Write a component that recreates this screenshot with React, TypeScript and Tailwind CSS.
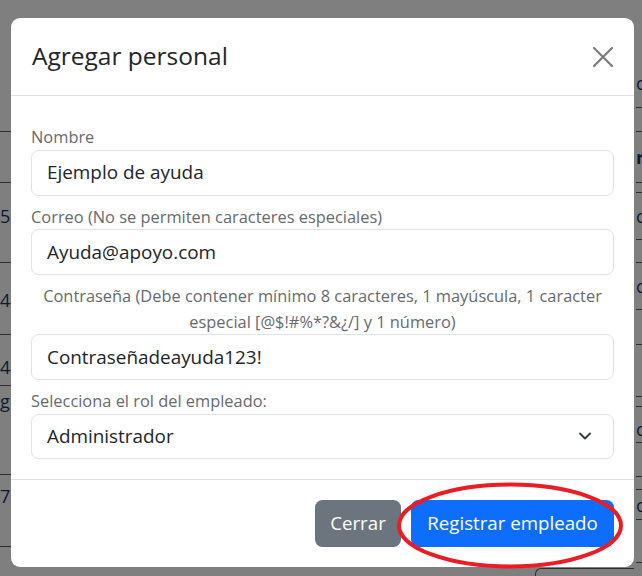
import { ChevronDown } from "lucide-react"

const font = { fontFamily: '"Open Sans", "Noto Sans", sans-serif' }

function Field({ label, value, center }: { label: string; value: string; center?: boolean }) {
  return (
    <div>
      <label
        className={`mt-2 block text-[16.4px] leading-[25.5px] text-[#666a6e] ${center ? "text-center px-1" : ""}`}
      >
        {label}
      </label>
      <div className="flex h-[46px] items-center rounded-[7.5px] border border-[#dee2e6] px-[15px] text-[18.9px] text-[#212529]">
        {value}
      </div>
    </div>
  )
}

export default function App() {
  return (
    <div className="relative h-[576px] w-full overflow-hidden bg-[#7f7f7f]" style={font}>
      {/* page behind the backdrop */}
      <div className="flex h-full text-[18px] text-[#0b1a33]">
        <div className="w-[11px] overflow-hidden whitespace-nowrap">
          <div className="h-[132px] border-b border-[#2e2e2e]"></div>
          <div className="h-[51px] border-b border-[#2e2e2e]"></div>
          <div className="flex h-[80px] items-center border-b border-[#2e2e2e] pb-[12px]">50</div>
          <div className="flex h-[72px] items-center border-b border-[#2e2e2e] pt-[4px]">44</div>
          <div className="flex h-[51px] items-end border-b border-[#2e2e2e] pb-[4px]">44</div>
          <div className="flex h-[89px] items-start border-b border-[#2e2e2e] pt-[2px]">gu</div>
          <div className="flex h-[72px] items-start border-b border-[#2e2e2e] pt-[8px]">70</div>
        </div>
        <div className="flex flex-1 flex-col justify-end">
          <div className="flex h-[8px] items-end">
            <div className="ml-[524px] h-[8px] flex-1 rounded-tl-md border-l border-t border-[#2e2e2e]"></div>
          </div>
        </div>
        <div className="w-[8px] overflow-hidden whitespace-nowrap pl-[2px]">
          <div className="flex h-[108px] items-end border-b border-[#2e2e2e] pb-[10px]">oc</div>
          <div className="h-[24px] border-b border-[#2e2e2e]"></div>
          <div className="flex h-[51px] items-center border-b border-[#2e2e2e] font-bold">re</div>
          <div className="h-[10px] border-b border-[#2e2e2e]"></div>
          <div className="flex h-[47px] items-center border-b border-[#2e2e2e]">c</div>
          <div className="h-[23px] border-b border-[#2e2e2e]"></div>
          <div className="flex h-[47px] items-center border-b border-[#2e2e2e]">c</div>
          <div className="h-[35px] border-b border-[#2e2e2e]"></div>
          <div className="h-[52px] border-b border-[#2e2e2e]"></div>
          <div className="h-[10px] border-b border-[#2e2e2e]"></div>
          <div className="flex h-[36px] items-center border-b border-[#2e2e2e] pt-[10px]">c</div>
          <div className="h-[34px] border-b border-[#2e2e2e]"></div>
          <div className="flex h-[13px] items-start border-b border-[#2e2e2e]"></div>
          <div className="flex h-[30px] items-center border-b border-[#2e2e2e] pt-[2px]">c</div>
          <div className="h-[43px] border-b border-[#2e2e2e]"></div>
        </div>
      </div>

      {/* modal */}
      <div className="absolute left-[11px] top-[18px] w-[623px] rounded-[9px] bg-white">
        <div className="flex h-[78px] items-center justify-between border-b border-[#dee2e6] pl-[21px] pr-[20px]">
          <h5 className="text-[24.5px] font-medium text-[#212529]">Agregar personal</h5>
          <svg width="20" height="20" viewBox="0 0 20 20" className="mr-[1px] mt-[1px]">
            <path d="M1 1 L19 19 M19 1 L1 19" stroke="#7b7b7b" strokeWidth="2.2" strokeLinecap="round" />
          </svg>
        </div>

        <div className="px-[20px] pb-[20px] pt-[20px]">
          <Field label="Nombre" value="Ejemplo de ayuda" />
          <Field label="Correo (No se permiten caracteres especiales)" value="Ayuda@apoyo.com" />
          <Field
            center
            label="Contraseña (Debe contener mínimo 8 caracteres, 1 mayúscula, 1 caracter especial [@$!#%*?&¿/] y 1 número)"
            value="Contraseñadeayuda123!"
          />
          <div>
            <label className="mt-2 block text-[16.4px] leading-[25.5px] text-[#666a6e]">
              Selecciona el rol del empleado:
            </label>
            <div className="flex h-[45px] items-center justify-between rounded-[7.5px] border border-[#dee2e6] pl-[15px] pr-[18px] text-[18.9px] text-[#212529]">
              <span>Administrador</span>
              <ChevronDown size={20} strokeWidth={2.2} color="#343a40" />
            </div>
          </div>
        </div>

        <div className="relative flex items-center justify-end gap-[10px] border-t border-[#dee2e6] px-[20px] py-[20px]">
          <button className="h-[47px] w-[86px] rounded-[7.5px] bg-[#6c757d] text-[18.7px] text-white">Cerrar</button>
          <button className="h-[47px] w-[203px] rounded-[7.5px] bg-[#0d6efd] text-[18.7px] text-white">
            Registrar empleado
          </button>
          <svg width="230" height="88" viewBox="0 0 230 88" className="absolute left-[386px] top-[2px]">
            <ellipse cx="113" cy="43.5" rx="111" ry="41" fill="none" stroke="#ec1c24" strokeWidth="4" />
          </svg>
        </div>
      </div>
    </div>
  )
}
